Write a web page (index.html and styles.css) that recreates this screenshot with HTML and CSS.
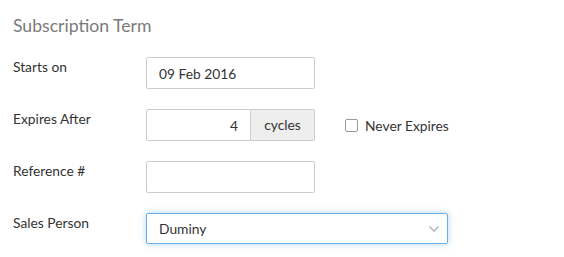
FILE: index.html
```html
<!DOCTYPE html>
<html lang="en">
<head>
    <meta charset="UTF-8">
    <title>Subscription Term</title>
    <link rel="stylesheet" href="styles.css">
</head>
<body>
    <div class="section">
        <h3 class="section-title">Subscription Term</h3>

        <div class="form-row">
            <label class="form-label" for="startsOn">Starts on</label>
            <input class="form-input" type="text" id="startsOn" value="09 Feb 2016">
        </div>

        <div class="form-row">
            <label class="form-label" for="cycles">Expires After</label>
            <div class="input-group">
                <input class="form-input num-input" type="text" id="cycles" value="4">
                <span class="addon">cycles</span>
            </div>
            <label class="check-label">
                <span class="checkbox"></span>
                Never Expires
            </label>
        </div>

        <div class="form-row">
            <label class="form-label" for="refNo">Reference #</label>
            <input class="form-input" type="text" id="refNo" value="">
        </div>

        <div class="form-row">
            <label class="form-label" for="salesPerson">Sales Person</label>
            <div class="select-box" id="salesPerson">
                <span>Duminy</span>
                <svg class="chevron" width="12" height="8" viewBox="0 0 12 8">
                    <path d="M1.5 1.5 L6 6 L10.5 1.5" fill="none" stroke="#bbb" stroke-width="1.6"/>
                </svg>
            </div>
        </div>
    </div>
</body>
</html>
```

FILE: styles.css
```css
body {
    margin: 0;
    background-color: #fff;
    font-family: 'Lato', 'Open Sans', sans-serif;
    font-size: 13.8px;
    color: #333;
}
.section {
    padding: 14px 13px 0 13px;
}
.section-title {
    margin: 0 0 19px 0;
    font-size: 17.6px;
    line-height: 24px;
    font-weight: normal;
    color: #7b7b7b;
}
.form-row {
    display: flex;
    align-items: flex-start;
    margin-bottom: 20px;
}
.form-label {
    width: 133px;
    padding-top: 1px;
    line-height: 18px;
    flex-shrink: 0;
}
.form-input {
    box-sizing: border-box;
    width: 169px;
    height: 32px;
    padding: 0 12px;
    border: 1px solid #ccc;
    border-radius: 2px;
    font-family: inherit;
    font-size: 13.8px;
    color: #333;
    outline: none;
}
.input-group {
    display: flex;
    width: 169px;
}
.num-input {
    width: 105px;
    text-align: right;
    border-radius: 2px 0 0 2px;
}
.addon {
    box-sizing: border-box;
    width: 64px;
    height: 32px;
    line-height: 30px;
    text-align: center;
    background-color: #eee;
    border: 1px solid #ccc;
    border-left: none;
    border-radius: 0 2px 2px 0;
}
.check-label {
    display: flex;
    align-items: center;
    gap: 7px;
    margin-left: 30px;
    height: 30px;
    margin-top: 1px;
}
.checkbox {
    box-sizing: border-box;
    width: 13px;
    height: 13px;
    border: 1px solid #999;
    border-radius: 2px;
    background-color: #fff;
}
.select-box {
    box-sizing: border-box;
    width: 302px;
    height: 31px;
    padding: 0 7px 0 12px;
    display: flex;
    align-items: center;
    justify-content: space-between;
    border: 1px solid #66afe9;
    border-radius: 2px;
    box-shadow: 0 0 6px rgba(102, 175, 233, 0.5);
}
.chevron {
    display: block;
}
```
